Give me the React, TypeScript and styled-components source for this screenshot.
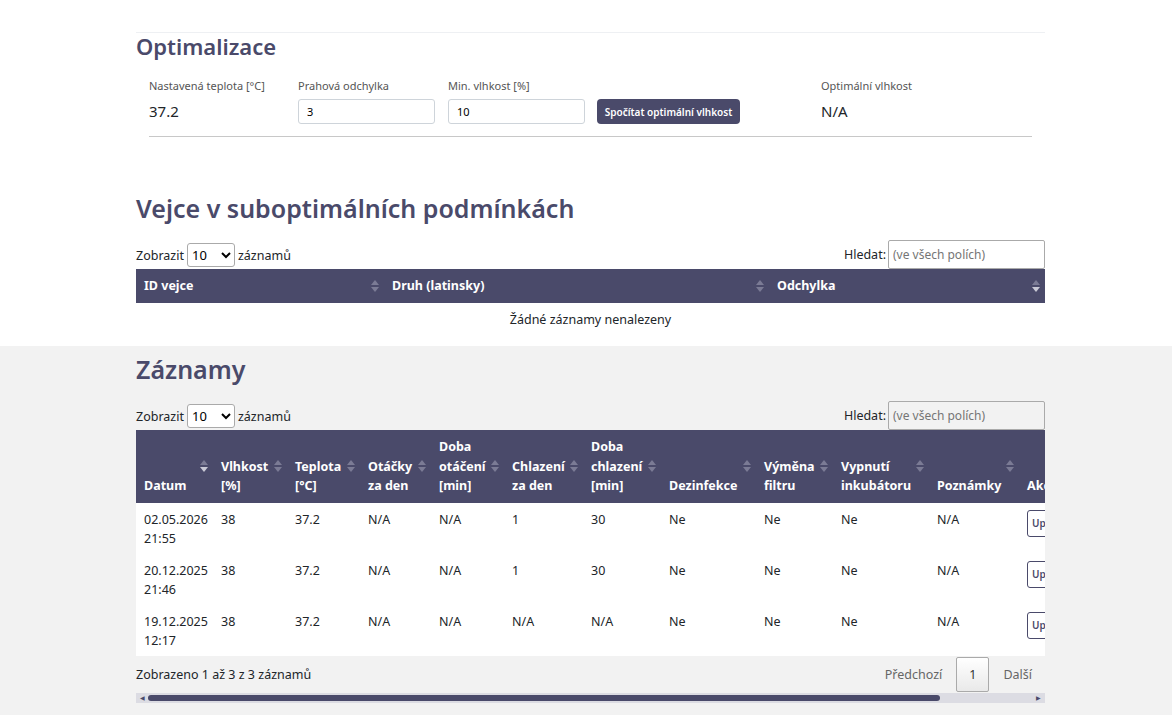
import React from "react";
import styled, { createGlobalStyle } from "styled-components";

const Global = createGlobalStyle`
  html, body { margin: 0; padding: 0; background: #f2f2f2; }
  body { font-family: "Noto Sans", "Liberation Sans", sans-serif; color: #212529; font-size: 13px; }
`;
const Band = styled.div<{ $white?: boolean }>`
  background: ${(p) => (p.$white ? "#fff" : "#f2f2f2")};
  padding: ${(p) => (p.$white ? "32px 0 0" : "8px 0 0")};
  height: ${(p) => (p.$white ? "314px" : "361px")};
  box-sizing: content-box;
`;
const Container = styled.div`
  width: 909px;
  margin-left: 136px;
`;
const Card = styled.div`
  border-top: 1px solid #eef0f3;
  height: 130px;
`;
const H2 = styled.h2<{ $size: number }>`
  margin: 0;
  color: #4a4a6a;
  font-weight: 600;
  font-size: ${(p) => p.$size}px;
  line-height: 1.2;
`;
const FieldRow = styled.div`
  display: flex;
  align-items: flex-end;
  margin: 19px 13px 0 13px;
  padding-bottom: 12px;
  border-bottom: 1px solid #c8c8c8;
`;
const Field = styled.div<{ $w: number }>`
  width: ${(p) => p.$w}px;
  display: flex;
  flex-direction: column;
  gap: 5px;
`;
const Label = styled.span`
  font-size: 11px;
  color: #555;
  height: 16px;
`;
const Value = styled.span`
  font-size: 15px;
  height: 25px;
  line-height: 25px;
`;
const Input = styled.input`
  width: 137px;
  height: 25px;
  box-sizing: border-box;
  border: 1px solid #ced4da;
  border-radius: 3px;
  padding: 0 8px;
  font: 11px "Noto Sans", sans-serif;
`;
const Btn = styled.button`
  width: 143px;
  height: 25px;
  background: #4a4a6a;
  color: #fff;
  border: 0;
  border-radius: 4px;
  font: 600 10px "Noto Sans", sans-serif;
  padding: 0;
  white-space: nowrap;
  margin-right: 81px;
`;
const Section = styled.div<{ $top: number }>`
  margin-top: ${(p) => p.$top}px;
`;
const Controls = styled.div`
  display: flex;
  justify-content: space-between;
  align-items: center;
  margin-top: 17px;
  height: 29px;
  font-size: 12.5px;
`;
const Select = styled.select`
  height: 24px;
  width: 48px;
  margin: 0 3px;
  font: 13px "Noto Sans", sans-serif;
  border: 1px solid #aaa;
  border-radius: 3px;
  background: #fff;
`;
const Search = styled.input`
  width: 157px;
  height: 29px;
  box-sizing: border-box;
  border: 1px solid #aaa;
  border-radius: 2px;
  margin-left: 2px;
  font: 12px "Noto Sans", sans-serif;
  padding: 0 4px;
  background: ${(p) => (p.disabled ? "#f2f2f2" : "#fff")};
`;
const Table = styled.table<{ $w: number }>`
  width: ${(p) => p.$w}px;
  border-collapse: collapse;
  table-layout: fixed;
  font-size: 12.5px;
`;
const Th = styled.th<{ $w: number }>`
  width: ${(p) => p.$w}px;
  background: #4a4a6a;
  color: #fff;
  font-weight: 700;
  text-align: left;
  vertical-align: bottom;
  padding: 7px 18px 7px 8px;
  position: relative;
  line-height: 19.5px;
  white-space: nowrap;
  box-sizing: border-box;
`;
const Sort = styled.span<{ $down?: boolean }>`
  position: absolute;
  right: 5px;
  top: 50%;
  transform: translateY(-50%);
  display: flex;
  flex-direction: column;
  gap: 2px;
  &::before, &::after {
    content: "";
    border-left: 4px solid transparent;
    border-right: 4px solid transparent;
  }
  &::before { border-bottom: 5px solid #7b7b95; }
  &::after { border-top: 5px solid ${(p) => (p.$down ? "#c9c9d6" : "#7b7b95")}; }
`;
const Td = styled.td<{ $wrap?: boolean }>`
  background: #fff;
  padding: 7px 8px 5px 8px;
  vertical-align: top;
  line-height: 19.5px;
  white-space: ${(p) => (p.$wrap ? "normal" : "nowrap")};
  overflow: hidden;
`;
const Empty = styled.td`
  background: #fff;
  text-align: center;
  padding: 7px;
  line-height: 19.5px;
`;
const Scroller = styled.div`
  width: 909px;
  overflow: hidden;
`;
const Edit = styled.span`
  display: inline-block;
  border: 1px solid #4a4a6a;
  border-radius: 3px;
  font-size: 10px;
  padding: 3px 4px;
  color: #4a4a6a;
  font-weight: 600;
`;
const Footer = styled.div`
  display: flex;
  justify-content: space-between;
  align-items: center;
  height: 37px;
  font-size: 12.5px;
`;
const Pager = styled.div`
  display: flex;
  align-items: center;
  color: #666;
  padding-right: 13px;
`;
const Page = styled.span`
  border: 1px solid #aaa;
  border-radius: 2px;
  background: linear-gradient(#fff, #e9e9e9);
  padding: 8px 12px;
  margin: 0 14px;
  color: #333;
`;
const Bar = styled.div`
  height: 10px;
  background: #dcdce3;
  display: flex;
  align-items: center;
  padding: 0 4px;
  gap: 3px;
  font-size: 6px;
  color: #4a4a6a;
`;
const Thumb = styled.div`
  width: 792px;
  height: 6px;
  border-radius: 3px;
  background: #4a4a6a;
`;

const cols: [string, number, boolean?][] = [
  ["Datum", 77, true], ["Vlhkost<br>[%]", 74], ["Teplota<br>[°C]", 73], ["Otáčky<br>za den", 71],
  ["Doba<br>otáčení<br>[min]", 73], ["Chlazení<br>za den", 79], ["Doba<br>chlazení<br>[min]", 78],
  ["Dezinfekce", 95], ["Výměna<br>filtru", 77], ["Vypnutí<br>inkubátoru", 96], ["Poznámky", 90], ["Akce", 80],
];
const rows = [
  ["02.05.2026 21:55", "38", "37.2", "N/A", "N/A", "1", "30", "Ne", "Ne", "Ne", "N/A"],
  ["20.12.2025 21:46", "38", "37.2", "N/A", "N/A", "1", "30", "Ne", "Ne", "Ne", "N/A"],
  ["19.12.2025 12:17", "38", "37.2", "N/A", "N/A", "N/A", "N/A", "Ne", "Ne", "Ne", "N/A"],
];

function ControlsRow({ disabled }: { disabled?: boolean }) {
  return (
    <Controls>
      <span>Zobrazit<Select defaultValue="10"><option>10</option></Select>záznamů</span>
      <span>Hledat:<Search placeholder="(ve všech polích)" disabled={disabled} /></span>
    </Controls>
  );
}

export default function App() {
  return (
    <>
      <Global />
      <Band $white>
        <Container>
          <Card>
            <H2 $size={22}>Optimalizace</H2>
            <FieldRow>
              <Field $w={149}><Label>Nastavená teplota [°C]</Label><Value>37.2</Value></Field>
              <Field $w={150}><Label>Prahová odchylka</Label><Input defaultValue="3" /></Field>
              <Field $w={149}><Label>Min. vlhkost [%]</Label><Input defaultValue="10" /></Field>
              <Btn>Spočítat optimální vlhkost</Btn>
              <Field $w={200}><Label>Optimální vlhkost</Label><Value>N/A</Value></Field>
            </FieldRow>
          </Card>
          <Section $top={30}>
            <H2 $size={25}>Vejce v suboptimálních podmínkách</H2>
            <ControlsRow />
            <Table $w={909}>
              <thead>
                <tr>
                  <Th $w={248}>ID vejce<Sort /></Th>
                  <Th $w={385}>Druh (latinsky)<Sort /></Th>
                  <Th $w={276}>Odchylka<Sort $down /></Th>
                </tr>
              </thead>
              <tbody><tr><Empty colSpan={3}>Žádné záznamy nenalezeny</Empty></tr></tbody>
            </Table>
          </Section>
        </Container>
      </Band>
      <Band>
        <Container>
          <H2 $size={25}>Záznamy</H2>
          <ControlsRow disabled />
          <Scroller>
            <Table $w={963}>
              <thead>
                <tr>
                  {cols.map(([t, w, d], i) => (
                    <Th key={i} $w={w}>
                      <span dangerouslySetInnerHTML={{ __html: t }} />
                      {i < 11 && <Sort $down={d} />}
                    </Th>
                  ))}
                </tr>
              </thead>
              <tbody>
                {rows.map((r, i) => (
                  <tr key={i}>
                    {r.map((c, j) => (
                      <Td key={j} $wrap={j === 0}>{c}</Td>
                    ))}
                    <Td><Edit>Upravit</Edit></Td>
                  </tr>
                ))}
              </tbody>
            </Table>
          </Scroller>
          <Footer>
            <span>Zobrazeno 1 až 3 z 3 záznamů</span>
            <Pager><span>Předchozí</span><Page>1</Page><span>Další</span></Pager>
          </Footer>
          <Bar>◀<Thumb /><span style={{ marginLeft: "auto" }}>▶</span></Bar>
        </Container>
      </Band>
    </>
  );
}
